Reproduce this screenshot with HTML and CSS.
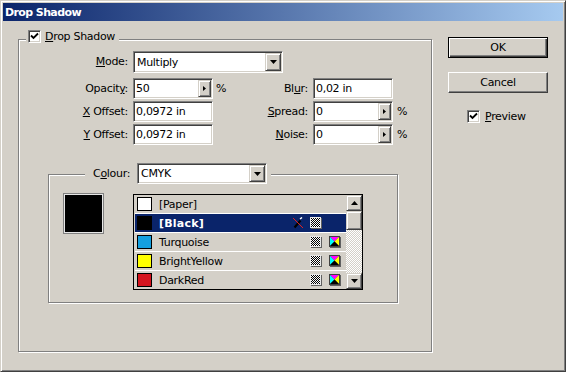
FILE: index.html
```html
<!DOCTYPE html>
<html>
<head>
<meta charset="utf-8">
<link rel="stylesheet" href="styles.css">
</head>
<body>
<div class="window">
  <div class="titlebar">Drop Shadow</div>
  <div class="content">
    <div class="group main">
      <div class="legend legend-main">
        <span class="check"><svg width="9" height="9" viewBox="0 0 9 9"><path d="M1 3.5 L3.5 6 L8 1.5" fill="none" stroke="#000" stroke-width="1.8"/></svg></span>
        <span><u>D</u>rop Shadow</span>
      </div>
      <div class="form">
        <span class="lbl"><u>M</u>ode:</span>
        <div class="field select mode"><span class="val">Multiply</span><span class="dd"><svg width="7" height="4" viewBox="0 0 7 4"><path d="M0 0H7L3.5 4Z" fill="#000"/></svg></span></div>

        <span class="lbl">Opacit<u>y</u>:</span>
        <div class="field"><span class="val">50</span><span class="spin"><svg width="3" height="5" viewBox="0 0 3 5"><path d="M0 0L3 2.5L0 5Z" fill="#000"/></svg></span></div>
        <span class="pct">%</span>
        <span class="lbl">Bl<u>u</u>r:</span>
        <div class="field"><span class="val">0,02 in</span></div>
        <span></span>

        <span class="lbl"><u>X</u> Offset:</span>
        <div class="field"><span class="val">0,0972 in</span></div>
        <span></span>
        <span class="lbl"><u>S</u>pread:</span>
        <div class="field"><span class="val">0</span><span class="spin"><svg width="3" height="5" viewBox="0 0 3 5"><path d="M0 0L3 2.5L0 5Z" fill="#000"/></svg></span></div>
        <span class="pct pct2">%</span>

        <span class="lbl"><u>Y</u> Offset:</span>
        <div class="field"><span class="val">0,0972 in</span></div>
        <span></span>
        <span class="lbl"><u>N</u>oise:</span>
        <div class="field"><span class="val">0</span><span class="spin"><svg width="3" height="5" viewBox="0 0 3 5"><path d="M0 0L3 2.5L0 5Z" fill="#000"/></svg></span></div>
        <span class="pct pct2">%</span>
      </div>

      <div class="group colour">
        <div class="legend legend-colour">
          <span class="clbl">C<u>o</u>lour:</span>
          <div class="field select csel"><span class="val">CMYK</span><span class="dd"><svg width="7" height="4" viewBox="0 0 7 4"><path d="M0 0H7L3.5 4Z" fill="#000"/></svg></span></div>
        </div>
        <div class="colour-body">
          <div class="bigswatch"></div>
          <div class="list">
            <div class="rows">
              <div class="row"><span class="sw" style="background:#ffffff"></span><span class="name">[Paper]</span></div>
              <div class="row sel"><span class="sw" style="background:#000000"></span><span class="name">[Black]</span>
                <span class="icons">
                  <svg class="ic" width="12" height="12" viewBox="0 0 12 12"><path d="M2.5 10.5 L8.5 3.5" stroke="#000" stroke-width="2.2"/><path d="M8 2 L10 0.5" stroke="#fff" stroke-width="1.5"/><path d="M1 1 L11 11" stroke="#e02020" stroke-width="1"/></svg>
                  <svg class="ic" width="12" height="12" viewBox="0 0 12 12"><rect x="1" y="1" width="11" height="11" fill="#606060"/><rect x="0" y="0" width="11" height="11" fill="#e8e8e8"/><rect x="1" y="1" width="9" height="9" fill="url(#ck)"/></svg>
                  <span class="ic"></span>
                </span>
              </div>
              <div class="row"><span class="sw" style="background:#14a0e0"></span><span class="name">Turquoise</span>
                <span class="icons"><span class="ic"></span>
                  <svg class="ic" width="12" height="12" viewBox="0 0 12 12"><rect x="1" y="1" width="11" height="11" fill="#606060"/><rect x="0" y="0" width="11" height="11" fill="#e8e8e8"/><rect x="1" y="1" width="9" height="9" fill="url(#ck)"/></svg>
                  <svg class="ic" width="12" height="12" viewBox="0 0 12 12"><rect x="1" y="1" width="11" height="11" fill="#606060"/><rect x="0" y="0" width="11" height="11" fill="#404040"/><path d="M1 1H10L5.5 5.5Z" fill="#ff00ff"/><path d="M1 1V10L5.5 5.5Z" fill="#00ffff"/><path d="M10 1V10L5.5 5.5Z" fill="#ffff00"/><path d="M1 10H10L5.5 5.5Z" fill="#000"/></svg>
                </span>
              </div>
              <div class="row"><span class="sw" style="background:#ffff00"></span><span class="name">BrightYellow</span>
                <span class="icons"><span class="ic"></span>
                  <svg class="ic" width="12" height="12" viewBox="0 0 12 12"><rect x="1" y="1" width="11" height="11" fill="#606060"/><rect x="0" y="0" width="11" height="11" fill="#e8e8e8"/><rect x="1" y="1" width="9" height="9" fill="url(#ck)"/></svg>
                  <svg class="ic" width="12" height="12" viewBox="0 0 12 12"><rect x="1" y="1" width="11" height="11" fill="#606060"/><rect x="0" y="0" width="11" height="11" fill="#404040"/><path d="M1 1H10L5.5 5.5Z" fill="#ff00ff"/><path d="M1 1V10L5.5 5.5Z" fill="#00ffff"/><path d="M10 1V10L5.5 5.5Z" fill="#ffff00"/><path d="M1 10H10L5.5 5.5Z" fill="#000"/></svg>
                </span>
              </div>
              <div class="row last"><span class="sw" style="background:#d4141e"></span><span class="name">DarkRed</span>
                <span class="icons"><span class="ic"></span>
                  <svg class="ic" width="12" height="12" viewBox="0 0 12 12"><rect x="1" y="1" width="11" height="11" fill="#606060"/><rect x="0" y="0" width="11" height="11" fill="#e8e8e8"/><rect x="1" y="1" width="9" height="9" fill="url(#ck)"/></svg>
                  <svg class="ic" width="12" height="12" viewBox="0 0 12 12"><rect x="1" y="1" width="11" height="11" fill="#606060"/><rect x="0" y="0" width="11" height="11" fill="#404040"/><path d="M1 1H10L5.5 5.5Z" fill="#ff00ff"/><path d="M1 1V10L5.5 5.5Z" fill="#00ffff"/><path d="M10 1V10L5.5 5.5Z" fill="#ffff00"/><path d="M1 10H10L5.5 5.5Z" fill="#000"/></svg>
                </span>
              </div>
            </div>
            <div class="scrollbar">
              <div class="sbtn"><svg width="7" height="4" viewBox="0 0 7 4"><path d="M3.5 0L7 4H0Z" fill="#000"/></svg></div>
              <div class="thumb"></div>
              <div class="track"></div>
              <div class="sbtn"><svg width="7" height="4" viewBox="0 0 7 4"><path d="M0 0H7L3.5 4Z" fill="#000"/></svg></div>
            </div>
          </div>
        </div>
      </div>
    </div>
    <div class="side">
      <div class="btn default">OK</div>
      <div class="btn cancel">Cancel</div>
      <div class="preview">
        <span class="check"><svg width="9" height="9" viewBox="0 0 9 9"><path d="M1 3.5 L3.5 6 L8 1.5" fill="none" stroke="#000" stroke-width="1.8"/></svg></span>
        <span><u>P</u>review</span>
      </div>
    </div>
  </div>
</div>
<svg width="0" height="0" class="defs"><defs><pattern id="ck" width="2" height="2" patternUnits="userSpaceOnUse"><rect width="2" height="2" fill="#fff"/><rect width="1" height="1" fill="#000"/><rect x="1" y="1" width="1" height="1" fill="#000"/></pattern></defs></svg>
</body>
</html>
```

FILE: styles.css
```css
body {
  margin: 0;
  font-family: "DejaVu Sans", sans-serif;
  font-size: 11px;
  letter-spacing: -0.3px;
  color: #000;
}

.defs { position: absolute; }

.window {
  width: 566px;
  height: 372px;
  box-sizing: border-box;
  background: #d4d0c8;
  border: 1px solid;
  border-color: #d4d0c8 #404040 #404040 #d4d0c8;
  box-shadow: inset 1px 1px #fff, inset -1px -1px #808080;
  padding: 2px;
  display: flex;
  flex-direction: column;
}

.titlebar {
  height: 18px;
  flex: none;
  background: linear-gradient(to right, #0a246a, #a6caf0);
  color: #fff;
  font-weight: bold;
  letter-spacing: -0.6px;
  display: flex;
  align-items: center;
  padding-left: 2px;
}

.content {
  display: flex;
  align-items: flex-start;
  padding-left: 15px;
}

.group {
  box-sizing: border-box;
  border: 1px solid #808080;
  box-shadow: inset 1px 1px #fff, 1px 1px #fff;
  display: flex;
  flex-direction: column;
}

.main {
  margin-top: 18px;
  width: 414px;
  height: 313px;
}

.legend {
  align-self: flex-start;
  display: flex;
  align-items: center;
  background: #d4d0c8;
}

.legend-main {
  margin: -10px 0 0 7px;
  padding: 0 4px 0 2px;
  height: 13px;
  gap: 4px;
}

.check {
  width: 13px;
  height: 13px;
  box-sizing: border-box;
  background: #fff;
  border: 1px solid;
  border-color: #808080 #fff #fff #808080;
  box-shadow: inset 1px 1px #404040, inset -1px -1px #d4d0c8;
  display: flex;
  align-items: center;
  justify-content: center;
}

.form {
  display: grid;
  grid-template-columns: 114px 80px 15px 85px 80px auto;
  grid-template-rows: 25px 21px 21px 21px;
  row-gap: 2px;
  margin-top: 8px;
}

.lbl {
  align-self: center;
  text-align: right;
  padding-right: 5px;
}

.form .lbl:first-child { align-self: start; padding-top: 4px; }

.field {
  box-sizing: border-box;
  height: 21px;
  background: #fff;
  border: 1px solid;
  border-color: #808080 #fff #fff #808080;
  box-shadow: inset 1px 1px #404040, inset -1px -1px #d4d0c8;
  padding: 1px;
  display: flex;
  align-items: stretch;
}

.val {
  flex: 1;
  display: flex;
  align-items: center;
  padding-left: 1px;
  white-space: nowrap;
}

.mode {
  grid-column: 2 / -1;
  justify-self: start;
  width: 150px;
  height: 22px;
}

.select .val { padding-left: 2px; }

.dd, .spin, .sbtn {
  box-sizing: border-box;
  background: #d4d0c8;
  border: 1px solid;
  border-color: #d4d0c8 #404040 #404040 #d4d0c8;
  box-shadow: inset 1px 1px #fff, inset -1px -1px #808080;
  display: flex;
  align-items: center;
  justify-content: center;
}

.dd { width: 16px; }
.spin { width: 13px; }

.pct {
  align-self: center;
  padding-left: 3px;
}
.pct2 { padding-left: 4px; }

.colour {
  margin: 29px 0 0 29px;
  width: 350px;
  height: 129px;
}

.legend-colour {
  margin: -12px 0 0 36px;
  padding: 0 4px 0 8px;
  height: 21px;
}

.clbl { width: 44px; }

.csel { width: 130px; }

.colour-body {
  display: flex;
  align-items: flex-start;
  margin-top: 9px;
  padding-left: 14px;
  gap: 29px;
}

.bigswatch {
  width: 41px;
  height: 41px;
  box-sizing: border-box;
  border: 1px solid #808080;
  box-shadow: inset 0 0 0 1px #e6e6e6;
  background: #000;
}

.list {
  margin-top: 1px;
  width: 230px;
  height: 96px;
  box-sizing: border-box;
  border: 1px solid #000;
  display: flex;
  background: #d4d0c8;
}

.rows {
  flex: 1;
  display: flex;
  flex-direction: column;
  padding-left: 1px;
}

.row {
  height: 18px;
  flex: none;
  border-bottom: 1px solid #fff;
  display: flex;
  align-items: center;
  padding-left: 2px;
}

.row.last { border-bottom: none; }

.row.sel {
  background: #0a246a;
  color: #fff;
  font-weight: bold;
  letter-spacing: 0.2px;
}

.sw {
  width: 15px;
  height: 14px;
  box-sizing: border-box;
  border: 1px solid #000;
  flex: none;
}

.name { margin-left: 7px; }

.icons {
  margin-left: auto;
  display: flex;
  align-items: center;
  padding-right: 5px;
}

.ic {
  width: 12px;
  height: 12px;
  display: block;
}
.icons .ic + .ic { margin-left: 6px; }
.icons .ic:last-child { margin-left: 7px; }

.scrollbar {
  width: 16px;
  display: flex;
  flex-direction: column;
}

.sbtn { height: 16px; flex: none; }

.thumb {
  height: 19px;
  flex: none;
  box-sizing: border-box;
  border: 1px solid;
  border-color: #d4d0c8 #404040 #404040 #d4d0c8;
  box-shadow: inset 1px 1px #fff, inset -1px -1px #808080;
  background: #d4d0c8;
}

.track {
  flex: 1;
  background-color: #fff;
  background-image: repeating-conic-gradient(#d4d0c8 0 25%, #fff 0 50%);
  background-size: 2px 2px;
}

.side {
  margin-left: 16px;
  margin-top: 16px;
  width: 100px;
  display: flex;
  flex-direction: column;
}

.btn {
  height: 21px;
  box-sizing: border-box;
  display: flex;
  align-items: center;
  justify-content: center;
  background: #d4d0c8;
}

.default {
  border: 1px solid #000;
  box-shadow: inset 1px 1px #fff, inset -1px -1px #404040, inset -2px -2px #808080;
}

.cancel {
  margin-top: 14px;
  border: 1px solid;
  border-color: #fff #404040 #404040 #fff;
  box-shadow: inset -1px -1px #808080;
}

.preview {
  margin-top: 17px;
  margin-left: 19px;
  display: flex;
  align-items: center;
  gap: 5px;
}
```
